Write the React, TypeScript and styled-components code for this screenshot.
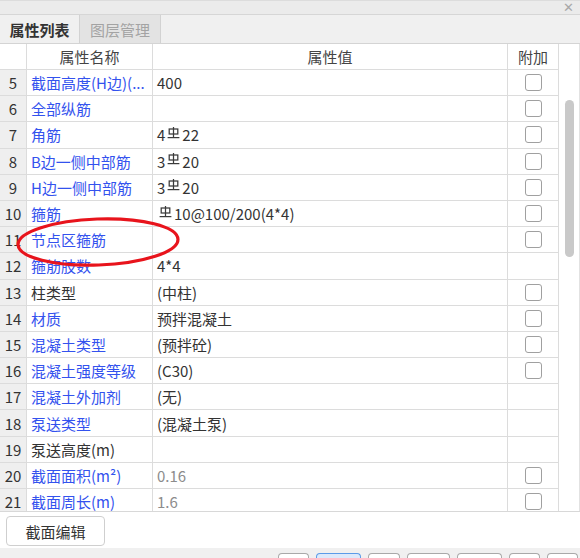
import React from "react";
import styled, { createGlobalStyle } from "styled-components";

const Global = createGlobalStyle`
  html, body { margin: 0; padding: 0; background: #fff; }
  body { font-family: "Noto Sans CJK SC", "Noto Sans", sans-serif; }
`;

const Panel = styled.div`
  position: relative;
  width: 580px;
  height: 558px;
  overflow: hidden;
  background: #fff;
`;

const TitleBar = styled.div`
  height: 15px;
  box-sizing: border-box;
  background: #ebebeb;
  border-top: 1px solid #dcdcdc;
  border-bottom: 1px solid #d6d6d6;
  display: flex;
  justify-content: flex-end;
  align-items: center;
  padding-right: 6px;
`;

const Close = styled.span`
  font-size: 13px;
  line-height: 13px;
  color: #a8a8a8;
  font-family: "DejaVu Sans", sans-serif;
`;

const TabBar = styled.div`
  height: 28px;
  background: #f0f0f0;
  border-bottom: 1px solid #d4d4d4;
  display: flex;
`;

const Tab = styled.div<{ $active?: boolean }>`
  width: ${(p) => (p.$active ? "79px" : "80px")};
  display: flex;
  align-items: center;
  justify-content: center;
  font-size: 15px;
  font-weight: ${(p) => (p.$active ? 700 : 400)};
  color: ${(p) => (p.$active ? "#333" : "#a3a3a3")};
  background: ${(p) => (p.$active ? "#f0f0f0" : "#e3e3e3")};
  border-right: 1px solid #d2d2d2;
`;

const Body = styled.div`
  display: flex;
  height: 467px;
  border-bottom: 1px solid #d8d8d8;
  overflow: hidden;
`;

const Table = styled.div`
  width: 559px;
  display: flex;
  flex-direction: column;
`;

const Row = styled.div<{ $head?: boolean }>`
  display: grid;
  grid-template-columns: 27px 126px 355px 51px;
  height: ${(p) => (p.$head ? "26px" : "26.2px")};
  flex: none;
`;

const Cell = styled.div<{ $align?: string; $color?: string }>`
  box-sizing: border-box;
  border-right: 1px solid #dcdcdc;
  border-bottom: 1px solid #dcdcdc;
  display: flex;
  align-items: center;
  justify-content: ${(p) => p.$align || "flex-start"};
  padding: 0 4px;
  font-size: 15px;
  color: ${(p) => p.$color || "#333"};
  background: #fff;
  white-space: nowrap;
  overflow: hidden;
`;

const IndexCell = styled(Cell)`
  justify-content: center;
  padding: 0;
  background: #efefef;
  color: #333;
`;

const Check = styled.span`
  width: 17px;
  height: 17px;
  box-sizing: border-box;
  border: 1.5px solid #a0a0a0;
  border-radius: 3px;
  background: #fff;
`;

const ScrollTrack = styled.div`
  width: 21px;
  border-right: 1px solid #e2e2e2;
  box-sizing: border-box;
  padding: 56px 0 0 6px;
`;

const Thumb = styled.div`
  width: 9px;
  height: 157px;
  border-radius: 5px;
  background: #c9c9c9;
`;

const Footer = styled.div`
  height: 36px;
  padding: 4px 0 0 6px;
  box-sizing: border-box;
`;

const Button = styled.div`
  width: 99px;
  height: 30px;
  box-sizing: border-box;
  border: 1px solid #cfcfcf;
  border-radius: 4px;
  display: flex;
  align-items: center;
  justify-content: center;
  font-size: 15px;
  color: #333;
  background: #fff;
`;

const BottomStrip = styled.div`
  height: 10px;
  background: #f0f0f0;
  display: flex;
  align-items: flex-end;
  padding-left: 278px;
  gap: 5px;
`;

const MiniBtn = styled.div<{ $w: number; $on?: boolean }>`
  width: ${(p) => p.$w}px;
  height: 5px;
  box-sizing: border-box;
  border: 1px solid ${(p) => (p.$on ? "#5b9be8" : "#a9a9a9")};
  border-bottom: none;
  border-radius: 4px 4px 0 0;
  background: ${(p) => (p.$on ? "#dce9fb" : "#fff")};
  margin-right: 2px;
`;

const Mark = styled.svg`
  width: 13px;
  height: 12px;
  margin: 0 2px 4px 2px;
  flex: none;
`;

const Overlay = styled.svg`
  position: absolute;
  left: 0;
  top: 0;
  pointer-events: none;
`;

const Rebar = () => (
  <Mark viewBox="0 0 13 12">
    <g fill="none" stroke="#3a3a3a" strokeWidth="1.25">
      <rect x="2.2" y="2" width="8.6" height="5" />
      <line x1="6.5" y1="0" x2="6.5" y2="10.4" />
      <line x1="0.6" y1="10.6" x2="12.4" y2="10.6" />
    </g>
  </Mark>
);

const BLUE = "#3352ee";

type R = { n: number; name: string; blue: boolean; value: React.ReactNode; gray?: boolean; cb: boolean };

const withBar = (a: string, b: string) => (
  <>
    {a}
    <Rebar />
    {b}
  </>
);

const rows: R[] = [
  { n: 5, name: "截面高度(H边)(...", blue: true, value: "400", cb: true },
  { n: 6, name: "全部纵筋", blue: true, value: "", cb: true },
  { n: 7, name: "角筋", blue: true, value: withBar("4", "22"), cb: true },
  { n: 8, name: "B边一侧中部筋", blue: true, value: withBar("3", "20"), cb: true },
  { n: 9, name: "H边一侧中部筋", blue: true, value: withBar("3", "20"), cb: true },
  { n: 10, name: "箍筋", blue: true, value: withBar("", "10@100/200(4*4)"), cb: true },
  { n: 11, name: "节点区箍筋", blue: true, value: "", cb: true },
  { n: 12, name: "箍筋肢数", blue: true, value: "4*4", cb: false },
  { n: 13, name: "柱类型", blue: false, value: "(中柱)", cb: true },
  { n: 14, name: "材质", blue: true, value: "预拌混凝土", cb: true },
  { n: 15, name: "混凝土类型", blue: true, value: "(预拌砼)", cb: true },
  { n: 16, name: "混凝土强度等级", blue: true, value: "(C30)", cb: true },
  { n: 17, name: "混凝土外加剂", blue: true, value: "(无)", cb: false },
  { n: 18, name: "泵送类型", blue: true, value: "(混凝土泵)", cb: false },
  { n: 19, name: "泵送高度(m)", blue: false, value: "", cb: false },
  { n: 20, name: "截面面积(m²)", blue: true, value: "0.16", gray: true, cb: true },
  { n: 21, name: "截面周长(m)", blue: true, value: "1.6", gray: true, cb: true },
];

const minis = [
  { w: 31 },
  { w: 45, on: true },
  { w: 32 },
  { w: 44 },
  { w: 45 },
  { w: 31 },
  { w: 31 },
];

export default function App() {
  return (
    <Panel>
      <Global />
      <TitleBar>
        <Close>✕</Close>
      </TitleBar>
      <TabBar>
        <Tab $active>属性列表</Tab>
        <Tab>图层管理</Tab>
      </TabBar>
      <Body>
        <Table>
          <Row $head>
            <Cell />
            <Cell $align="center" $color="#444">属性名称</Cell>
            <Cell $align="center" $color="#444">属性值</Cell>
            <Cell $align="center" $color="#444">附加</Cell>
          </Row>
          {rows.map((r) => (
            <Row key={r.n}>
              <IndexCell>{r.n}</IndexCell>
              <Cell $color={r.blue ? BLUE : "#333"}>{r.name}</Cell>
              <Cell $color={r.gray ? "#8c8c8c" : "#333"}>{r.value}</Cell>
              <Cell $align="center">{r.cb && <Check />}</Cell>
            </Row>
          ))}
        </Table>
        <ScrollTrack>
          <Thumb />
        </ScrollTrack>
      </Body>
      <Footer>
        <Button>截面编辑</Button>
      </Footer>
      <BottomStrip>
        {minis.map((m, i) => (
          <MiniBtn key={i} $w={m.w} $on={m.on} />
        ))}
      </BottomStrip>
      <Overlay width="580" height="558">
        <ellipse
          cx="98"
          cy="242"
          rx="80"
          ry="23"
          transform="rotate(-2 98 242)"
          fill="none"
          stroke="#e8141c"
          strokeWidth="3.2"
        />
      </Overlay>
    </Panel>
  );
}
